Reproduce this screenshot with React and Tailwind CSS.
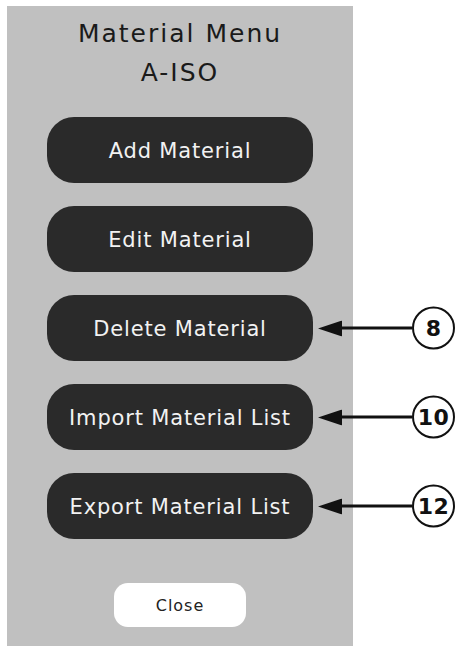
import React from 'react';

const menuItems = [
  { label: 'Add Material' },
  { label: 'Edit Material' },
  { label: 'Delete Material', callout: '8' },
  { label: 'Import Material List', callout: '10' },
  { label: 'Export Material List', callout: '12' },
];

// Arrow + numbered circle pointing at a button
const Callout = ({ num }) => (
  <div className="absolute left-[311px] top-1/2 -translate-y-1/2 flex items-center w-[137px]">
    <svg width="24" height="16" viewBox="0 0 24 16" className="shrink-0">
      <polygon points="0,8 24,0 24,16" fill="#111" />
    </svg>
    <div className="flex-1 h-[3px] bg-[#111]" />
    <div className="w-[43px] h-[43px] shrink-0 rounded-full border-2 border-[#111] bg-white flex items-center justify-center text-[22px] font-bold text-[#111] tracking-[0.02em]">
      {num}
    </div>
  </div>
);

const App = () => {
  return (
    <div className="w-[457px] h-[646px] bg-white overflow-hidden font-['DejaVu_Sans','Liberation_Sans',sans-serif]">
      <div className="ml-[7px] mt-[6px] w-[346px] h-[640px] bg-[#c0c0c0] flex flex-col items-center pt-[8px]">
        {/* Title */}
        <h1 className="text-[25px] leading-[39px] tracking-[0.08em] text-[#1a1a1a] text-center font-normal">
          Material Menu
          <br />
          A-ISO
        </h1>

        {/* Menu buttons */}
        <div className="mt-[25px] flex flex-col gap-[23px] w-full">
          {menuItems.map((item) => (
            <div key={item.label} className="relative flex justify-center">
              <button className="w-[266px] h-[66px] pt-[4px] rounded-[27px] bg-[#2a2a2a] text-[#f2f2f2] text-[21px] tracking-[0.04em]">
                {item.label}
              </button>
              {item.callout && <Callout num={item.callout} />}
            </div>
          ))}
        </div>

        <button className="mt-[44px] w-[132px] h-[44px] pt-[2px] rounded-[14px] bg-white text-[16px] tracking-[0.06em] text-[#222]">
          Close
        </button>
      </div>
    </div>
  );
};

export default App;
